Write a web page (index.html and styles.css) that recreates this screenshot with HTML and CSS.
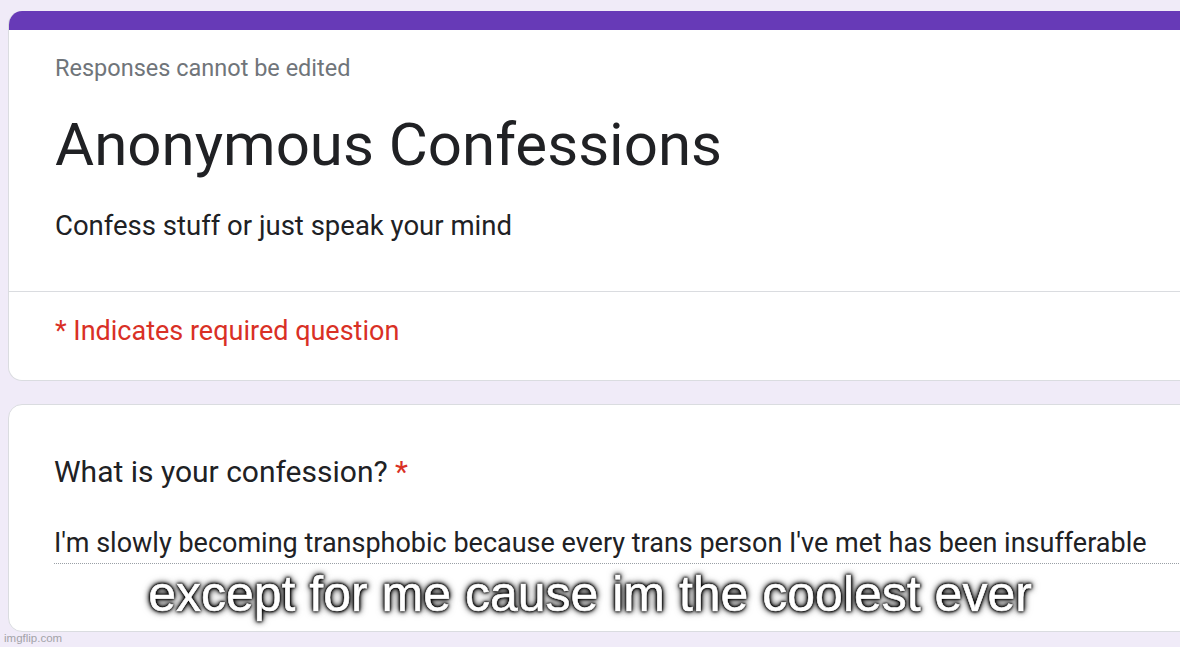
FILE: index.html
```html
<!DOCTYPE html>
<html lang="en">
<head>
<meta charset="utf-8">
<title>Anonymous Confessions</title>
<link rel="stylesheet" href="styles.css">
</head>
<body>
<div class="page">
  <section class="card card-head">
    <div class="accent"></div>
    <div class="head-main">
      <div class="note">Responses cannot be edited</div>
      <h1 class="title">Anonymous Confessions</h1>
      <p class="desc">Confess stuff or just speak your mind</p>
    </div>
    <div class="head-foot">
      <span class="req">* Indicates required question</span>
    </div>
  </section>
  <section class="card card-q">
    <div class="question">What is your confession? <span class="star">*</span></div>
    <div class="answer">I'm slowly becoming transphobic because every trans person I've met has been insufferable</div>
  </section>
</div>
<div class="caption">except for me cause im the coolest ever</div>
<div class="watermark">imgflip.com</div>
</body>
</html>
```
FILE: styles.css
```css
html, body {
  margin: 0;
  padding: 0;
}
body {
  background: #f0ebf8;
  width: 1180px;
  height: 647px;
  overflow: hidden;
  position: relative;
  font-family: Roboto, "Liberation Sans", Arial, sans-serif;
  color: #202124;
}
.page {
  padding: 11px 0 0 8px;
}
.card {
  width: 1220px;
  background: #fff;
  border: 1px solid #dadce0;
  border-radius: 14px;
  overflow: hidden;
  box-sizing: border-box;
}
.card-head {
  border-top: none;
}
.accent {
  height: 19px;
  background: #673ab7;
}
.head-main {
  padding: 23px 0 49px 46px;
  border-bottom: 1px solid #dadce0;
}
.note {
  font-size: 23.5px;
  line-height: 30px;
  color: #70757a;
}
.title {
  margin: 27px 0 0;
  font-size: 60px;
  line-height: 70px;
  font-weight: 400;
  color: #202124;
}
.desc {
  margin: 30px 0 0;
  font-size: 27.5px;
  line-height: 32px;
}
.head-foot {
  padding: 23px 0 33px 46px;
}
.req {
  font-size: 27px;
  line-height: 32px;
  color: #d93025;
  display: block;
}
.card-q {
  margin-top: 23px;
  padding: 49px 0 67px 45px;
}
.question {
  font-size: 30px;
  line-height: 36px;
}
.star {
  color: #d93025;
}
.answer {
  margin-top: 37px;
  font-size: 27px;
  line-height: 32px;
  padding-bottom: 4px;
  border-bottom: 1px dotted #9aa0a6;
}
.caption {
  position: absolute;
  left: 0;
  right: 0;
  top: 565px;
  text-align: center;
  font-family: "Liberation Sans", Arial, sans-serif;
  font-size: 50px;
  line-height: 58px;
  color: #fff;
  -webkit-text-stroke: 0.6px #fff;
  text-shadow: 0 0 2px #000, 0 0 2px #000, 0 0 3px #000, 0 0 4px #000, 0 0 6px #000, 0 0 8px rgba(0,0,0,0.6);
}
.watermark {
  position: absolute;
  left: 4px;
  top: 631px;
  font-family: "Liberation Sans", Arial, sans-serif;
  font-size: 11.5px;
  line-height: 14px;
  color: #a3a3a8;
}
```
